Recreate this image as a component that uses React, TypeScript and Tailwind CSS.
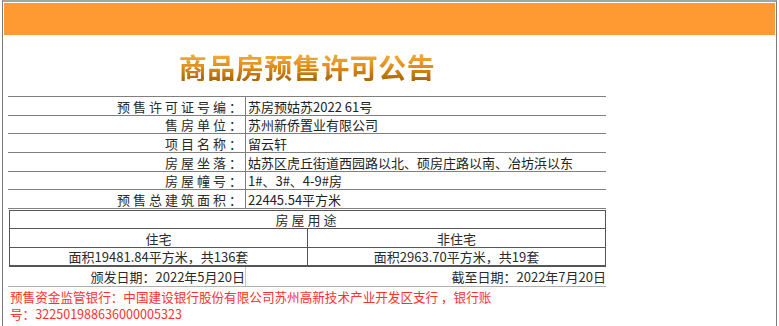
import React from "react";

const rows: { label: string; value: string; h: string }[] = [
  { label: "预售许可证号编：", value: "苏房预姑苏2022 61号", h: "h-[19px]" },
  { label: "售房单位：", value: "苏州新侨置业有限公司", h: "h-[18px]" },
  { label: "项目名称：", value: "留云轩", h: "h-[19px]" },
  { label: "房屋坐落：", value: "姑苏区虎丘街道西园路以北、硕房庄路以南、冶坊浜以东", h: "h-[19px]" },
  { label: "房屋幢号：", value: "1#、3#、4-9#房", h: "h-[18px]" },
  { label: "预售总建筑面积：", value: "22445.54平方米", h: "h-[19px]" },
];

export default function App() {
  return (
    <div className="w-[779px] h-[326px] bg-white overflow-hidden font-['Noto_Sans_CJK_SC','Liberation_Sans',sans-serif] text-[13px] text-[#2a2a2a]">
      <div className="mx-[2px] h-[326px] border-x border-t-2 border-x-[#7c7c7c] border-t-[#a4a4a4]">
        <div className="mt-px mx-px h-[32px] bg-[#ff9a33]" />
        <div className="ml-[5px] w-[598px]">
          <div className="h-[61px] pt-[3px] flex items-center justify-center">
            <span className="text-[28px] leading-none font-bold tracking-[0.5px] bg-gradient-to-b from-[#f5b040] via-[#df8c18] to-[#a8650a] bg-clip-text text-transparent">
              商品房预售许可公告
            </span>
          </div>

          <div className="border-t border-[#808080]">
            {rows.map((r) => (
              <div key={r.label} className={`flex ${r.h} border-b border-[#808080] leading-none`}>
                <div className="w-[238px] border-r border-[#808080] flex items-center justify-end tracking-[3px]">
                  {r.label}
                </div>
                <div className="flex-1 flex items-center pl-[2px] text-[#222] whitespace-nowrap">{r.value}</div>
              </div>
            ))}
          </div>

          <div className="mt-px ml-px w-[597px] border border-b-2 border-[#555]">
            <div className="h-[18px] border-b border-[#555] flex items-center justify-center tracking-[3px] leading-none">
              房屋用途
            </div>
            <div className="flex h-[19px] border-b border-[#555] leading-none">
              <div className="w-[298px] border-r border-[#555] flex items-center justify-center">住宅</div>
              <div className="flex-1 flex items-center justify-center">非住宅</div>
            </div>
            <div className="flex h-[17px] leading-none">
              <div className="w-[298px] border-r border-[#555] flex items-center justify-center">
                面积19481.84平方米，共136套
              </div>
              <div className="flex-1 flex items-center justify-center">面积2963.70平方米，共19套</div>
            </div>
          </div>

          <div className="flex h-[20px] border-b border-[#b0b0b0] leading-none">
            <div className="w-[238px] border-r border-[#c8c8c8] flex items-center justify-end">
              颁发日期：2022年5月20日
            </div>
            <div className="flex-1 flex items-center justify-end">截至日期：2022年7月20日</div>
          </div>

          <div className="pt-px pl-[2px] leading-[17px] text-[#ff3030] text-[12.6px]">
            <div className="whitespace-nowrap">预售资金监管银行：中国建设银行股份有限公司苏州高新技术产业开发区支行 ，银行账</div>
            <div className="whitespace-nowrap">号：322501988636000005323</div>
          </div>
        </div>
      </div>
    </div>
  );
}
